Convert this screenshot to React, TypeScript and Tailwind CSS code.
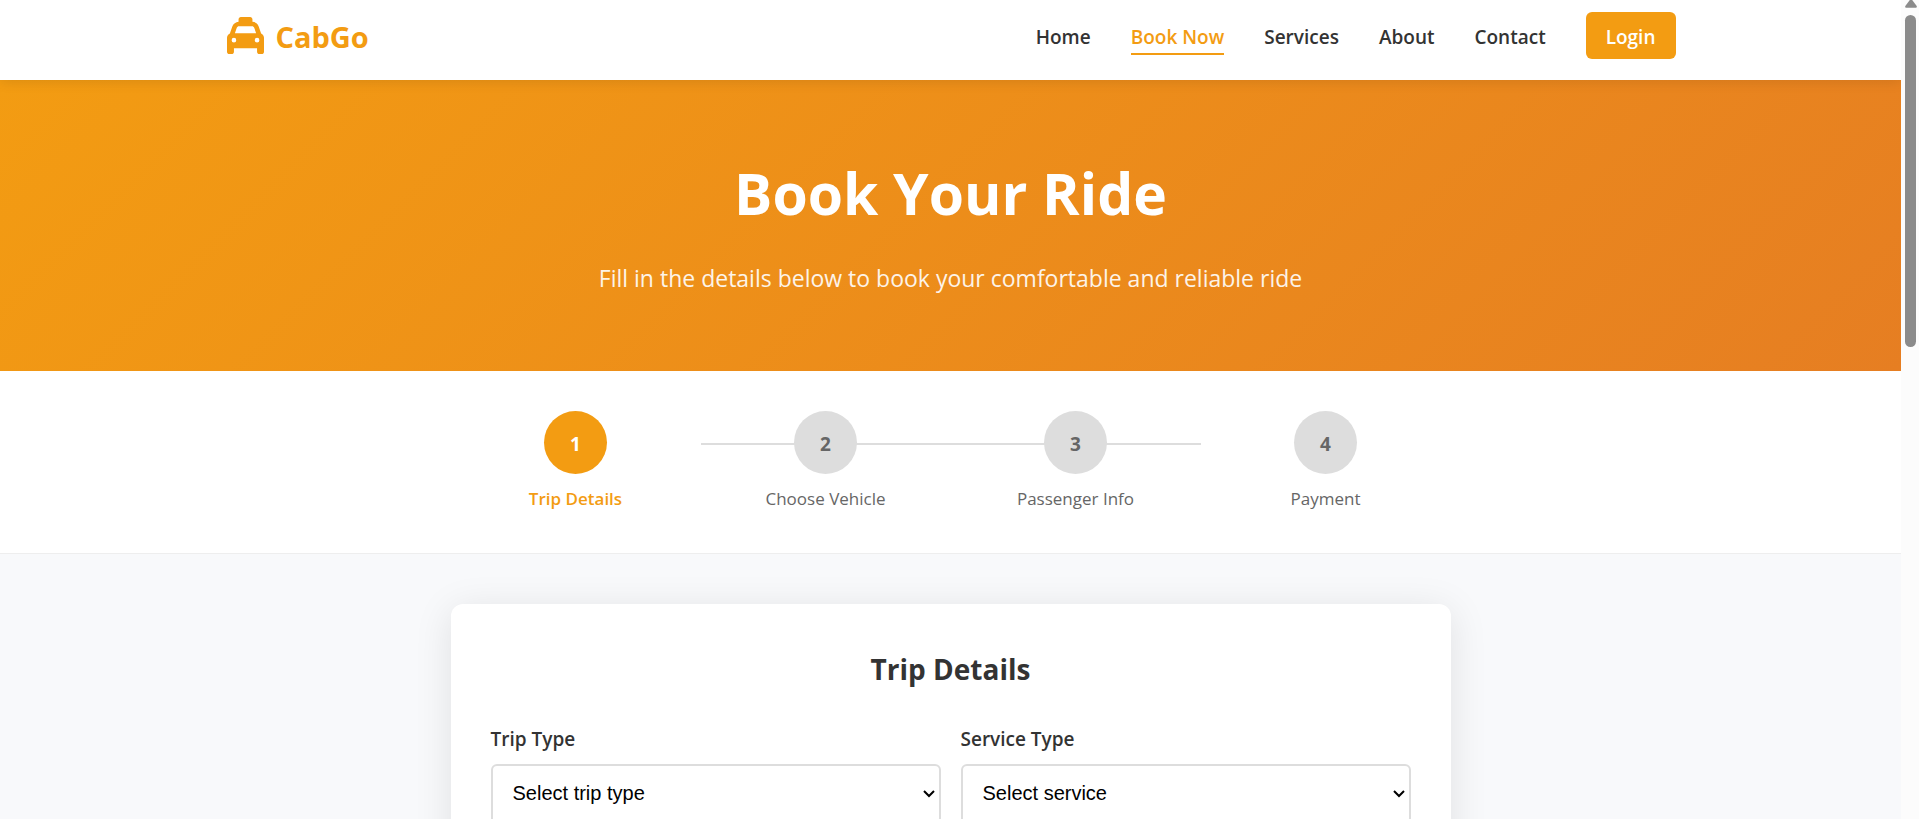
import { FaTaxi } from "react-icons/fa6";

const links = ["Home", "Book Now", "Services", "About", "Contact"];
const steps = ["Trip Details", "Choose Vehicle", "Passenger Info", "Payment"];

const fields = [
  {
    id: "trip-type",
    label: "Trip Type",
    options: ["Select trip type", "One Way", "Round Trip"],
  },
  {
    id: "service-type",
    label: "Service Type",
    options: ["Select service", "Local", "Outstation", "Airport Transfer"],
  },
];

function Header() {
  return (
    <header className="relative z-10 h-20 shrink-0 bg-white shadow-[0_2px_12px_rgba(0,0,0,0.1)]">
      <div className="mx-auto flex h-[71px] max-w-[1500px] items-center justify-between pr-[25px] pl-[26px]">
        <a href="#" className="flex items-center gap-3 text-[#f39c12]">
          <FaTaxi size={37} />
          <span className="pt-0.5 text-[29px] font-bold">CabGo</span>
        </a>
        <nav className="flex items-center gap-10">
          {links.map((link) => (
            <a
              key={link}
              href="#"
              className={
                link === "Book Now"
                  ? "border-b-2 border-[#f39c12] pt-1.5 text-[19px] leading-[31px] font-semibold text-[#f39c12]"
                  : "border-b-2 border-transparent pt-1.5 text-[19px] leading-[31px] font-semibold text-[#333]"
              }
            >
              {link}
            </a>
          ))}
          <button
            type="button"
            className="h-[47px] rounded-md bg-[#f39c12] px-5 pt-1 text-[19px] font-semibold text-white"
          >
            Login
          </button>
        </nav>
      </div>
    </header>
  );
}

function Hero() {
  return (
    <section className="bg-[linear-gradient(135deg,#f39c12,#e67e22)] pt-[65px] pb-[73px] text-center text-white">
      <h1 className="text-[57px] leading-[96px] font-bold">Book Your Ride</h1>
      <p className="mt-[18px] text-[23px] leading-[39px] opacity-90">
        Fill in the details below to book your comfortable and reliable ride
      </p>
    </section>
  );
}

function Steps() {
  return (
    <section className="border-b border-[#eee] bg-white py-10">
      <ol className="mx-auto flex max-w-[1000px]">
        {steps.map((step, i) => (
          <li key={step} className="relative flex flex-1 flex-col items-center">
            {(i === 1 || i === 2) && (
              <span className="absolute inset-x-0 top-8 h-0.5 bg-[#ddd]" />
            )}
            <span
              className={
                i === 0
                  ? "relative flex size-[63px] items-center justify-center rounded-full bg-[#f39c12] pt-1 text-[19px] font-bold text-white"
                  : "relative flex size-[63px] items-center justify-center rounded-full bg-[#ddd] pt-1 text-[19px] font-bold text-[#666]"
              }
            >
              {i + 1}
            </span>
            <span
              className={
                i === 0
                  ? "mt-2.5 text-[17px] leading-[29px] font-semibold text-[#f39c12]"
                  : "mt-2.5 text-[17px] leading-[29px] text-[#666]"
              }
            >
              {step}
            </span>
          </li>
        ))}
      </ol>
    </section>
  );
}

function TripForm() {
  return (
    <section className="bg-[#f8f9fb] py-[50px]">
      <form className="mx-auto max-w-[1000px] rounded-xl bg-white p-10 shadow-[0_6px_38px_rgba(0,0,0,0.1)]">
        <h2 className="text-center text-[28px] leading-[50px] font-bold text-[#333]">
          Trip Details
        </h2>
        <div className="mt-[26px] grid grid-cols-2 gap-5">
          {fields.map((field) => (
            <div key={field.id} className="flex flex-col gap-1.5">
              <label
                htmlFor={field.id}
                className="text-[19px] leading-[38px] font-semibold text-[#333]"
              >
                {field.label}
              </label>
              <div className="relative">
                <select
                  id={field.id}
                  className="h-[60px] w-full appearance-none rounded-md border-2 border-[#ddd] bg-white px-5 pb-0.5 font-['Liberation_Sans',Arial,sans-serif] text-[20px] text-black"
                >
                  {field.options.map((option) => (
                    <option key={option}>{option}</option>
                  ))}
                </select>
                <svg
                  className="pointer-events-none absolute top-6 right-[5px] h-3 w-[14px]"
                  viewBox="0 0 14 12"
                  fill="none"
                  stroke="#000"
                  strokeWidth="2"
                >
                  <path d="M2 3 7 8 12 3" />
                </svg>
              </div>
            </div>
          ))}
        </div>
      </form>
    </section>
  );
}

function Scrollbar() {
  return (
    <div className="flex w-[18px] shrink-0 flex-col items-center bg-[#fcfcfc] pl-px" aria-hidden="true">
      <svg className="h-[15px] w-3" viewBox="0 0 12 15" fill="#8b8b8b">
        <path d="M4.8 0h2.4L11.7 6q.6 1.5-.9 1.8H1.2Q-.3 7.5 .3 6Z" />
      </svg>
      <div className="h-[332px] w-[11px] rounded-full bg-[#8b8b8b]" />
    </div>
  );
}

export default function App() {
  return (
    <div className="flex h-screen overflow-hidden font-['Open_Sans','Noto_Sans',sans-serif]">
      <div className="min-w-0 flex-1 overflow-hidden bg-[#f8f9fb]">
        <Header />
        <main>
          <Hero />
          <Steps />
          <TripForm />
        </main>
      </div>
      <Scrollbar />
    </div>
  );
}
